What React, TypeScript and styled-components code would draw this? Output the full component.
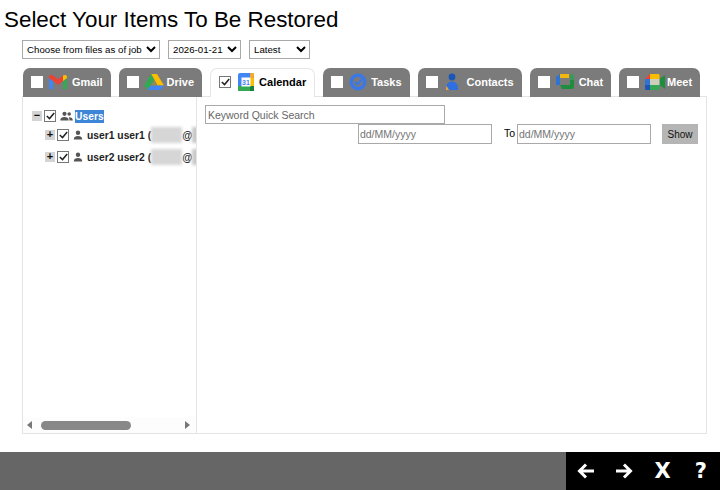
import React, { FC, ReactNode } from "react";
import styled, { createGlobalStyle } from "styled-components";

const GlobalStyle = createGlobalStyle`
  html, body {
    margin: 0;
    padding: 0;
    background: #fff;
  }
  body {
    font-family: "Liberation Sans", Arial, sans-serif;
    color: #000;
  }
`;

const GmailIcon = () => (
  <svg width="20" height="16" viewBox="0 0 20 16">
    <path d="M1 4v10c0 .8.5 1.200 1.200 1.200H5V7z" fill="#4285f4" />
    <path d="M15 7v8.200h2.800c.7 0 1.200-.5 1.200-1.200V4z" fill="#34a853" />
    <path d="M1 4l4 3 5 3.800L15 7V1.500L10 5.300 5 1.500 3 .8C1.800.6 1 1.800 1 3z" fill="#ea4335" />
    <path d="M15 1.500V7l4-3V3c0-1.800-1.600-2.600-3-1.800z" fill="#fbbc04" />
  </svg>
);

const DriveIcon = () => (
  <svg width="20" height="18" viewBox="0 0 20 18">
    <path d="M7 1h6l7 11.500h-6.500z" fill="#fbbc04" />
    <path d="M7 1l3.200 5.500L3.800 17 0 12.500z" fill="#34a853" />
    <path d="M6.500 12.500H20L16.500 17H3.800z" fill="#4285f4" />
    <path d="M10.200 6.500l3.300 6h-7z" fill="#8b8f55" />
  </svg>
);

const CalendarIcon = () => (
  <svg width="16" height="18" viewBox="0 0 16 18">
    <rect x="0" y="0" width="16" height="18" rx="2" fill="#4285f4" />
    <rect x="12" y="0" width="4" height="5" rx="1" fill="#f4a92a" />
    <rect x="12" y="5" width="4" height="8" fill="#fbbc04" />
    <rect x="0" y="13" width="12" height="5" fill="#34a853" />
    <rect x="12" y="13" width="4" height="5" fill="#188038" />
    <rect x="3.500" y="4.500" width="9" height="9" fill="#fff" />
    <text x="8" y="12" fontSize="7" fontWeight="700" textAnchor="middle" fill="#4285f4" fontFamily="Liberation Sans">
      31
    </text>
  </svg>
);

const TasksIcon = () => (
  <svg width="18" height="18" viewBox="0 0 18 18">
    <circle cx="9" cy="9" r="6.800" fill="none" stroke="#3b78e7" strokeWidth="3.400" />
    <path d="M6 9l2.500 2.500L15 4" fill="none" stroke="#3b78e7" strokeWidth="2.200" />
  </svg>
);

const ContactsIcon = () => (
  <svg width="14" height="18" viewBox="0 0 14 18">
    <circle cx="7" cy="4" r="3.400" fill="#1a56b8" />
    <path d="M1 17c-.6-5 2-8.500 6-8.500s6.600 3.500 6 8.500z" fill="#2f6fe0" />
    <path d="M1 17c-.2-1.600 0-3 .5-4.200L4 17z" fill="#e8a33d" />
  </svg>
);

const ChatIcon = () => (
  <svg width="18" height="16" viewBox="0 0 18 16">
    <rect x="0" y="3" width="4" height="8" fill="#2f74d0" />
    <path d="M4 0h9v4H4z" fill="#f2b70f" />
    <path d="M0 3l4-3v3z" fill="#2f74d0" />
    <path d="M14 0h1c1.500 0 3 1 3 2v4h-4z" fill="#2f9e54" opacity=".9" />
    <rect x="14" y="6" width="4" height="7" fill="#1e8e3e" />
    <path d="M4 11h14v2c0 1-.7 2-2 2H6z" fill="#1e8e3e" />
  </svg>
);

const MeetIcon = () => (
  <svg width="20" height="16" viewBox="0 0 20 16">
    <path d="M0 5l5-5v5z" fill="#ea4335" />
    <path d="M5 0h8c1 0 1.500.6 1.500 1.500V5H5z" fill="#fbbc04" />
    <rect x="0" y="5" width="5" height="6" fill="#2f74d0" />
    <path d="M0 11h5v5H1.500C.6 16 0 15.400 0 14.500z" fill="#1a56b8" />
    <path d="M5 11h9.500v3.500c0 1-.6 1.500-1.500 1.500H5z" fill="#34a853" />
    <path d="M14.500 5v6L20 15V1z" fill="#1e8e3e" />
    <rect x="5" y="5" width="9.500" height="6" fill="#cfcdbb" />
  </svg>
);

const TABS: { label: string; icon: ReactNode; before: number; after: number }[] = [
  { label: "Gmail", icon: <GmailIcon />, before: 5, after: 4 },
  { label: "Drive", icon: <DriveIcon />, before: 5, after: 3 },
  { label: "Calendar", icon: <CalendarIcon />, before: 7, after: 5 },
  { label: "Tasks", icon: <TasksIcon />, before: 6, after: 4 },
  { label: "Contacts", icon: <ContactsIcon />, before: 7, after: 8 },
  { label: "Chat", icon: <ChatIcon />, before: 6, after: 5 },
  { label: "Meet", icon: <MeetIcon />, before: 6, after: 2 },
];

const Check = () => (
  <svg width="9" height="8" viewBox="0 0 9 8">
    <path d="M.8 4l2.700 2.600L8.200 1" fill="none" stroke="#222" strokeWidth="1.500" />
  </svg>
);

const UserGlyph = () => (
  <svg width="10" height="10" viewBox="0 0 10 10">
    <circle cx="5" cy="2.800" r="2.200" fill="#555" />
    <path d="M.8 9.500c0-2.600 1.800-3.500 4.200-3.500s4.200.9 4.200 3.500z" fill="#555" />
  </svg>
);

const UsersGlyph = () => (
  <svg width="13" height="10" viewBox="0 0 13 10">
    <circle cx="4.500" cy="2.800" r="2.100" fill="#555" />
    <circle cx="9.200" cy="3" r="1.800" fill="#555" />
    <path d="M.3 9.500c0-2.600 1.800-3.500 4.200-3.500s4.200.9 4.200 3.500z" fill="#555" />
    <path d="M9.500 9.500h3.300c0-2.200-1.400-3.200-3.400-3.200l-.6.100c.5.800.7 1.900.7 3.100z" fill="#555" />
  </svg>
);

const ArrowLeft = () => (
  <svg width="18" height="16" viewBox="0 0 18 16">
    <path d="M17 8H3M9 1.500L2.500 8 9 14.500" fill="none" stroke="#fff" strokeWidth="3" />
  </svg>
);

const ArrowRight = () => (
  <svg width="18" height="16" viewBox="0 0 18 16">
    <path d="M1 8h14M9 1.500L15.500 8 9 14.500" fill="none" stroke="#fff" strokeWidth="3" />
  </svg>
);

const TreeUser: FC<{ name: string }> = ({ name }) => (
  <UserRow>
    <Expander>+</Expander>
    <TreeCheck>
      <Check />
    </TreeCheck>
    <UserIconSlot>
      <UserGlyph />
    </UserIconSlot>
    <UserName>
      {name} (<Blur />@<Blur $small />
    </UserName>
  </UserRow>
);

const App: FC = () => (
  <Page>
    <GlobalStyle />
    <Title>Select Your Items To Be Restored</Title>
    <Filters>
      <Select $width={138} defaultValue="job">
        <option value="job">Choose from files as of job</option>
      </Select>
      <Select $width={73} defaultValue="date">
        <option value="date">2026-01-21</option>
      </Select>
      <Select $width={61} defaultValue="latest">
        <option value="latest">Latest</option>
      </Select>
    </Filters>
    <Tabs>
      {TABS.map((tab) => {
        const active = tab.label === "Calendar";
        return (
          <Tab key={tab.label} $active={active}>
            <TabCheck $active={active}>{active && <Check />}</TabCheck>
            <TabIcon $before={tab.before} $after={tab.after}>
              {tab.icon}
            </TabIcon>
            <span>{tab.label}</span>
          </Tab>
        );
      })}
    </Tabs>
    <Panel>
      <TreePane>
        <Tree>
          <RootRow>
            <Expander>−</Expander>
            <TreeCheck>
              <Check />
            </TreeCheck>
            <UserIconSlot>
              <UsersGlyph />
            </UserIconSlot>
            <Selected>Users</Selected>
          </RootRow>
          <TreeUser name="user1 user1" />
          <TreeUser name="user2 user2" />
        </Tree>
        <HScroll>
          <ScrollArrow $dir="left" />
          <ScrollThumb />
          <ScrollArrow $dir="right" />
        </HScroll>
      </TreePane>
      <ResultPane>
        <SearchInput placeholder="Keyword Quick Search" />
        <DateRow>
          <DateInput placeholder="dd/MM/yyyy" />
          <ToLabel>To</ToLabel>
          <DateInput placeholder="dd/MM/yyyy" />
          <ShowButton>Show</ShowButton>
        </DateRow>
      </ResultPane>
    </Panel>
    <BottomBar>
      <NavButtons>
        <NavButton>
          <ArrowLeft />
        </NavButton>
        <NavButton>
          <ArrowRight />
        </NavButton>
        <NavButton>X</NavButton>
        <NavButton>?</NavButton>
      </NavButtons>
    </BottomBar>
  </Page>
);

export default App;

const Page = styled.div`
  width: 720px;
  height: 490px;
  display: flex;
  flex-direction: column;
  overflow: hidden;
`;

const Title = styled.h1`
  margin: 0;
  padding: 7px 0 0 4px;
  height: 33px;
  box-sizing: border-box;
  font-size: 22.400px;
  line-height: 26px;
  font-weight: 400;
`;

const Filters = styled.div`
  display: flex;
  gap: 8px;
  margin-top: 7px;
  padding-left: 22px;
`;

const Select = styled.select<{ $width: number }>`
  width: ${(p) => p.$width}px;
  height: 19px;
  padding: 0;
  box-sizing: border-box;
  border: 1px solid #a9a9a9;
  border-radius: 0;
  background: #fff;
  font-family: "Liberation Sans", Arial, sans-serif;
  font-size: 9.700px;
  color: #000;
`;

const Tabs = styled.div`
  display: flex;
  gap: 8px;
  margin-top: 9px;
  padding-left: 23px;
  height: 28px;
`;

const Tab = styled.div<{ $active: boolean }>`
  display: flex;
  align-items: center;
  box-sizing: border-box;
  height: 29px;
  padding: 0 8px 2px;
  border-radius: 7px 7px 0 0;
  background: ${(p) => (p.$active ? "#fff" : "#7b7b7b")};
  border: ${(p) => (p.$active ? "1px solid #e6e6e6" : "0")};
  border-bottom: 0;
  color: ${(p) => (p.$active ? "#000" : "#fff")};
  font-size: 11px;
  font-weight: 700;
  position: relative;
  z-index: ${(p) => (p.$active ? 1 : 0)};
`;

const TabCheck = styled.span<{ $active: boolean }>`
  width: 12px;
  height: 12px;
  box-sizing: border-box;
  background: #fff;
  border: ${(p) => (p.$active ? "1px solid #777" : "0")};
  display: flex;
  align-items: center;
  justify-content: center;
`;

const TabIcon = styled.span<{ $before: number; $after: number }>`
  display: flex;
  align-items: center;
  margin: 0 ${(p) => p.$after}px 0 ${(p) => p.$before}px;
`;

const Panel = styled.div`
  display: flex;
  margin: 0 13px 0 22px;
  height: 338px;
  box-sizing: border-box;
  border: 1px solid #e4e4e4;
  background: #fff;
`;

const TreePane = styled.div`
  width: 174px;
  box-sizing: border-box;
  border-right: 1px solid #e4e4e4;
  display: flex;
  flex-direction: column;
  justify-content: space-between;
  overflow: hidden;
`;

const Tree = styled.div`
  padding: 12px 0 0 9px;
  display: flex;
  flex-direction: column;
  white-space: nowrap;
`;

const RootRow = styled.div`
  display: flex;
  align-items: center;
  height: 14px;
`;

const UserRow = styled.div`
  display: flex;
  align-items: center;
  height: 14px;
  margin: 5px 0 0 13px;
  padding-bottom: 2px;
  & + & {
    margin-top: 6px;
  }
`;

const Expander = styled.span`
  width: 10px;
  height: 10px;
  flex: none;
  background: #d4d4d4;
  color: #111;
  font-size: 11px;
  line-height: 9px;
  font-weight: 700;
  text-align: center;
  margin-right: 2px;
`;

const TreeCheck = styled.span`
  width: 12px;
  height: 12px;
  flex: none;
  box-sizing: border-box;
  border: 1px solid #777;
  background: #fff;
  display: flex;
  align-items: center;
  justify-content: center;
`;

const UserIconSlot = styled.span`
  display: flex;
  margin: 0 4px;
`;

const Selected = styled.span`
  background: #3d85d6;
  color: #fff;
  font-size: 10.300px;
  font-weight: 700;
  line-height: 13px;
  margin-left: -2px;
`;

const UserName = styled.span`
  font-size: 10.300px;
  font-weight: 700;
  color: #222;
  display: flex;
  align-items: center;
  white-space: pre;
`;

const Blur = styled.span<{ $small?: boolean }>`
  display: inline-block;
  width: ${(p) => (p.$small ? 10 : 31)}px;
  height: 16px;
  background: ${(p) => (p.$small ? "#c8c8c8" : "#d6d6d6")};
  filter: blur(1.5px);
`;

const HScroll = styled.div`
  display: flex;
  align-items: center;
  height: 16px;
  padding: 0 6px 0 4px;
  background: #fdfdfd;
`;

const ScrollArrow = styled.span<{ $dir: "left" | "right" }>`
  width: 0;
  height: 0;
  border-top: 4px solid transparent;
  border-bottom: 4px solid transparent;
  ${(p) =>
    p.$dir === "left"
      ? "border-right: 5px solid #777;"
      : "border-left: 5px solid #777; margin-left: auto;"}
`;

const ScrollThumb = styled.span`
  width: 90px;
  height: 9px;
  margin-left: 9px;
  border-radius: 4.500px;
  background: #888;
`;

const ResultPane = styled.div`
  flex: 1;
  padding: 8px 8px 0 8px;
  display: flex;
  flex-direction: column;
`;

const SearchInput = styled.input`
  width: 240px;
  height: 19px;
  box-sizing: border-box;
  padding: 0 2px;
  border: 1px solid #a9a9a9;
  font-family: "Liberation Sans", Arial, sans-serif;
  font-size: 10.500px;
  &::placeholder {
    color: #666;
    opacity: 1;
  }
`;

const DateRow = styled.div`
  display: flex;
  align-items: center;
  margin: 0 0 0 153px;
`;

const DateInput = styled.input`
  width: 134px;
  height: 20px;
  box-sizing: border-box;
  padding: 0 1px;
  border: 1px solid #a9a9a9;
  font-family: "Liberation Sans", Arial, sans-serif;
  font-size: 10.500px;
  &::placeholder {
    color: #757575;
    opacity: 1;
  }
`;

const ToLabel = styled.span`
  font-size: 10.500px;
  margin: -2px 2px 0 12px;
`;

const ShowButton = styled.button`
  width: 36px;
  height: 20px;
  margin-left: 11px;
  padding: 0;
  border: 0;
  background: #b5b5b5;
  color: #111;
  font-family: "Liberation Sans", Arial, sans-serif;
  font-size: 10px;
`;

const BottomBar = styled.div`
  margin-top: 18px;
  height: 38px;
  background: #666;
  display: flex;
  justify-content: flex-end;
`;

const NavButtons = styled.div`
  width: 154px;
  background: #000;
  display: flex;
  align-items: center;
  padding-left: 1px;
  box-sizing: border-box;
`;

const NavButton = styled.span`
  width: 38.500px;
  display: flex;
  justify-content: center;
  align-items: center;
  color: #fff;
  font-family: "DejaVu Sans", sans-serif;
  font-size: 21px;
  font-weight: 700;
`;
